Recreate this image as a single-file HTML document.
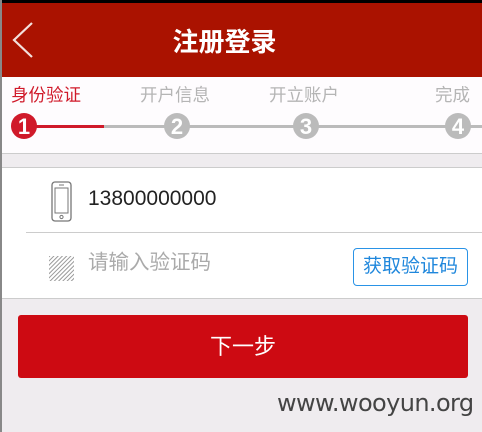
<!DOCTYPE html><html><head><meta charset="utf-8"><style>
*{margin:0;padding:0;box-sizing:border-box}
body{width:482px;height:432px;overflow:hidden;background:#efecef;font-family:"Liberation Sans","Noto Sans CJK SC",sans-serif;position:relative}
.a{position:absolute}
</style></head><body>
<div class="a" style="left:0;top:0;width:482px;height:3px;background:#000"></div>
<div class="a" style="left:0;top:3px;width:482px;height:74px;background:#aa1200"></div>
<svg class="a" style="left:10px;top:20px" width="26" height="40"><path d="M22 3 L4 20 L22 37" stroke="#f3e0dc" stroke-width="2.2" fill="none"/></svg>
<div class="a" style="left:0;top:23px;width:449px;text-align:center;color:#fff;font-size:26px;line-height:38px;font-weight:bold">注册登录</div>
<div class="a" style="left:0;top:77px;width:482px;height:76px;background:#fefcfe"></div>
<div class="a" style="left:11px;top:83px;font-size:17.5px;line-height:24px;color:#d01a2a">身份验证</div>
<div class="a" style="left:140px;top:83px;font-size:17.5px;line-height:24px;color:#b5b5b5">开户信息</div>
<div class="a" style="left:269px;top:83px;font-size:17.5px;line-height:24px;color:#b5b5b5">开立账户</div>
<div class="a" style="left:435px;top:83px;font-size:17.5px;line-height:24px;color:#b5b5b5">完成</div>
<div class="a" style="left:24px;top:125px;width:458px;height:3px;background:#bbb"></div>
<div class="a" style="left:24px;top:125px;width:80px;height:3px;background:#d01a2a"></div>
<svg class="a" style="left:0;top:110px" width="482" height="32" font-family="Liberation Sans" font-size="22" font-weight="bold" text-anchor="middle" fill="#fff">
<circle cx="24" cy="16" r="13" fill="#d01a2a"/><text x="24" y="24">1</text>
<circle cx="177" cy="16" r="13" fill="#bbb"/><text x="177" y="24">2</text>
<circle cx="306" cy="16" r="13" fill="#bbb"/><text x="306" y="24">3</text>
<circle cx="458" cy="16" r="13" fill="#bbb"/><text x="458" y="24">4</text>
</svg>
<div class="a" style="left:0;top:153px;width:482px;height:1px;background:#ccc"></div>
<div class="a" style="left:0;top:167px;width:482px;height:132px;background:#fff;border-top:1px solid #ccc;border-bottom:1px solid #ccc"></div>
<svg class="a" style="left:51px;top:181px" width="22" height="42"><rect x="1" y="1" width="19" height="39" rx="3" fill="none" stroke="#777" stroke-width="1.3"/><rect x="4" y="7" width="13" height="25" fill="none" stroke="#777"/><line x1="8" y1="4" x2="13" y2="4" stroke="#777"/><circle cx="10.5" cy="36" r="1.6" fill="none" stroke="#777"/></svg>
<div class="a" style="left:88px;top:186px;font-size:21px;line-height:26px;color:#222">13800000000</div>
<div class="a" style="left:26px;top:232px;width:456px;height:1px;background:#ccc"></div>
<svg class="a" style="left:49px;top:256px" width="25" height="25"><defs><pattern id="h" width="3" height="3" patternUnits="userSpaceOnUse" patternTransform="rotate(45)"><rect width="1" height="3" fill="#999"/></pattern></defs><rect width="25" height="25" fill="url(#h)"/></svg>
<div class="a" style="left:88px;top:250px;font-size:20.5px;line-height:26px;color:#aaa">请输入验证码</div>
<div class="a" style="left:353px;top:248px;width:115px;height:38px;border:1.5px solid #2a93e6;border-radius:4px;color:#1f87dc;font-size:19px;line-height:35px;text-align:center">获取验证码</div>
<div class="a" style="left:18px;top:315px;width:450px;height:63px;background:#cd0a12;border-radius:3px;color:#fff;font-size:22px;line-height:63px;text-align:center">下一步</div>
<div class="a" style="left:0;top:0;width:2px;height:432px;background:#888"></div>
<div class="a" style="left:277px;top:389px;font-size:24px;line-height:28px;color:#444;font-family:'DejaVu Sans',sans-serif;letter-spacing:-0.6px">www.wooyun.org</div>
</body></html>
